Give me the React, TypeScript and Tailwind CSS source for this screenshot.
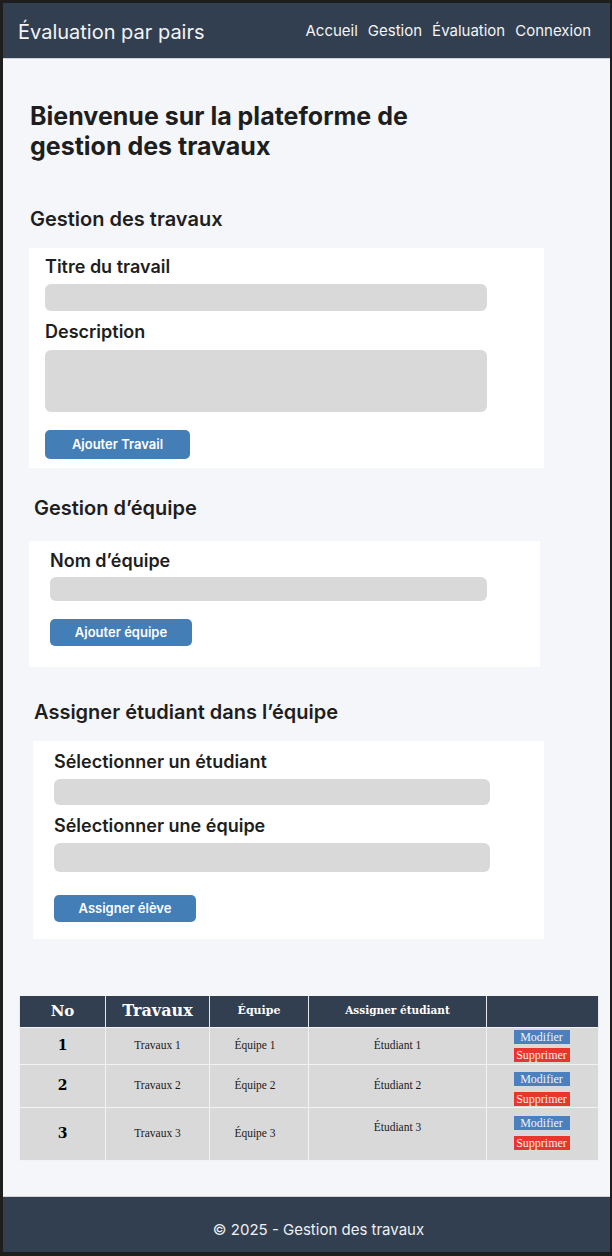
import type { ReactNode } from "react";

type Row = {
  no: string;
  travail: string;
  equipe: string;
  etudiant: string;
  rowClass: string;
  actionClass: string;
  etudiantClass: string;
};

const rows: Row[] = [
  {
    no: "1",
    travail: "Travaux 1",
    equipe: "Équipe 1",
    etudiant: "Étudiant 1",
    rowClass: "h-[37px]",
    actionClass: "pt-[2px] gap-[4px]",
    etudiantClass: "",
  },
  {
    no: "2",
    travail: "Travaux 2",
    equipe: "Équipe 2",
    etudiant: "Étudiant 2",
    rowClass: "h-[43px]",
    actionClass: "pt-[7px] gap-[6px]",
    etudiantClass: "",
  },
  {
    no: "3",
    travail: "Travaux 3",
    equipe: "Équipe 3",
    etudiant: "Étudiant 3",
    rowClass: "h-[53px]",
    actionClass: "pt-[8px] gap-[6px]",
    etudiantClass: "pb-[12px]",
  },
];

function Label({ children }: { children: ReactNode }) {
  return (
    <p className="text-[18px] leading-[22px] font-semibold text-[#1e1e1e]">
      {children}
    </p>
  );
}

function Field({ className }: { className: string }) {
  return <div className={`rounded-[6px] bg-[#d9d9d9] ${className}`} />;
}

function BlueButton({
  label,
  className,
}: {
  label: string;
  className: string;
}) {
  return (
    <button
      type="button"
      className={`flex items-center justify-center rounded-[5px] bg-[#437eb7] text-[13px] font-semibold text-white ${className}`}
    >
      {label}
    </button>
  );
}

function SectionTitle({
  children,
  className,
}: {
  children: ReactNode;
  className: string;
}) {
  return (
    <h2
      className={`text-[20px] leading-[24px] font-semibold text-[#1e1e1e] ${className}`}
    >
      {children}
    </h2>
  );
}

export default function App() {
  return (
    <div
      className="flex h-[1256px] w-[612px] flex-col bg-[#1e1e1e] pt-[3px] pr-[2px] pb-[4px] pl-[3px]"
      style={{ fontFamily: "Inter, 'Noto Sans', sans-serif" }}
    >
      <header className="flex h-[55px] shrink-0 items-start justify-between bg-[#323f50] pr-[19px] pl-[15px] text-[#f3f4f6]">
        <span className="mt-[17px] text-[20px] leading-[24px]">
          Évaluation par pairs
        </span>
        <nav className="mt-[18px] flex gap-[10px] text-[15px] leading-[20px]">
          <a>Accueil</a>
          <a>Gestion</a>
          <a>Évaluation</a>
          <a>Connexion</a>
        </nav>
      </header>

      <main className="flex flex-1 flex-col border-t border-[#cfd3d9] bg-[#f5f6fa]">
        <h1 className="mt-[42px] ml-[27px] text-[25px] leading-[30px] font-bold text-[#1e1e1e]">
          Bienvenue sur la plateforme de
          <br />
          gestion des travaux
        </h1>

        <SectionTitle className="mt-[46px] ml-[27px]">
          Gestion des travaux
        </SectionTitle>
        <section className="mt-[17px] ml-[26px] flex w-[515px] flex-col bg-white pt-[8px] pb-[9px] pl-[16px]">
          <Label>Titre du travail</Label>
          <Field className="mt-[6px] h-[27px] w-[442px]" />
          <div className="mt-[10px]">
            <Label>Description</Label>
          </div>
          <Field className="mt-[7px] h-[62px] w-[442px]" />
          <BlueButton
            label="Ajouter Travail"
            className="mt-[18px] h-[29px] w-[145px]"
          />
        </section>

        <SectionTitle className="mt-[28px] ml-[31px]">
          Gestion d’équipe
        </SectionTitle>
        <section className="mt-[21px] ml-[26px] flex w-[511px] flex-col bg-white pt-[9px] pb-[21px] pl-[21px]">
          <Label>Nom d’équipe</Label>
          <Field className="mt-[5px] h-[24px] w-[437px]" />
          <BlueButton
            label="Ajouter équipe"
            className="mt-[18px] h-[27px] w-[142px]"
          />
        </section>

        <SectionTitle className="mt-[33px] ml-[31px]">
          Assigner étudiant dans l’équipe
        </SectionTitle>
        <section className="mt-[17px] ml-[30px] flex w-[511px] flex-col bg-white pt-[10px] pb-[17px] pl-[21px]">
          <Label>Sélectionner un étudiant</Label>
          <Field className="mt-[6px] h-[26px] w-[436px]" />
          <div className="mt-[10px]">
            <Label>Sélectionner une équipe</Label>
          </div>
          <Field className="mt-[6px] h-[29px] w-[436px]" />
          <BlueButton
            label="Assigner élève"
            className="mt-[23px] h-[27px] w-[142px]"
          />
        </section>

        <table
          className="mt-[57px] ml-[16px] w-[579px] table-fixed border-collapse"
          style={{ fontFamily: "'Liberation Serif', serif" }}
        >
          <colgroup>
            <col className="w-[86px]" />
            <col className="w-[104px]" />
            <col className="w-[99px]" />
            <col className="w-[178px]" />
            <col className="w-[112px]" />
          </colgroup>
          <thead>
            <tr
              className="h-[31px] bg-[#323f50] text-white"
              style={{ fontFamily: "'DejaVu Serif', serif" }}
            >
              <th className="border-x border-[#e5e7eb] text-[15px] font-bold">
                No
              </th>
              <th className="border-x border-[#e5e7eb] text-[16px] font-bold">
                Travaux
              </th>
              <th className="border-x border-[#e5e7eb] text-[11px] font-bold">
                Équipe
              </th>
              <th className="border-x border-[#e5e7eb] text-[10.5px] font-bold">
                Assigner étudiant
              </th>
              <th className="border-x border-[#e5e7eb]" />
            </tr>
          </thead>
          <tbody>
            {rows.map((row) => (
              <tr
                key={row.no}
                className={`bg-[#d9d9d9] text-[11.5px] text-[#1a1a1a] ${row.rowClass}`}
              >
                <td
                  className="border border-[#f3f3f3] text-center text-[14px] font-bold text-black"
                  style={{ fontFamily: "'DejaVu Serif', serif" }}
                >
                  {row.no}
                </td>
                <td className="border border-[#f3f3f3] text-center">
                  {row.travail}
                </td>
                <td className="border border-[#f3f3f3] pr-[8px] text-center">
                  {row.equipe}
                </td>
                <td
                  className={`border border-[#f3f3f3] text-center ${row.etudiantClass}`}
                >
                  {row.etudiant}
                </td>
                <td className="border border-[#f3f3f3] align-top">
                  <div
                    className={`flex flex-col items-center pr-[2px] ${row.actionClass}`}
                  >
                    <span className="flex h-[14px] w-[56px] items-center justify-center bg-[#4a80bd] text-[12px] leading-none text-[#eef3fa]">
                      Modifier
                    </span>
                    <span className="flex h-[14px] w-[56px] items-center justify-center bg-[#e8362c] text-[12px] leading-none text-[#fdeceb]">
                      Supprimer
                    </span>
                  </div>
                </td>
              </tr>
            ))}
          </tbody>
        </table>
      </main>

      <footer className="flex h-[56px] shrink-0 justify-center border-t border-[#cfd3d9] bg-[#323f50] pt-[23px] pl-6 text-[15px] leading-[20px] text-[#eef0f3]">
        © 2025 - Gestion des travaux
      </footer>
    </div>
  );
}
